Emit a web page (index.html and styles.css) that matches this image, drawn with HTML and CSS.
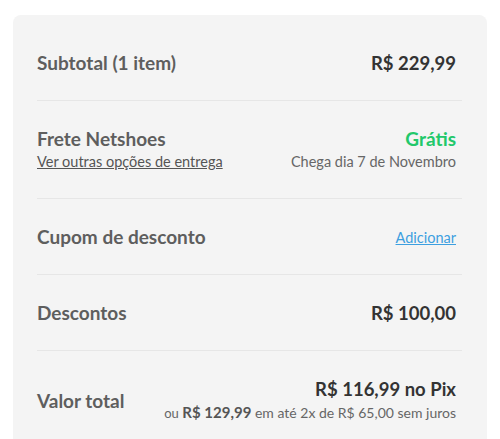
FILE: index.html
```
<!DOCTYPE html>
<html lang="pt-BR">
<head>
    <meta charset="UTF-8">
    <title>Resumo do pedido</title>
    <link rel="stylesheet" href="styles.css">
</head>
<body>
    <div class="summary">
        <div class="row">
            <span class="label">Subtotal (1 item)</span>
            <span class="price">R$ 229,99</span>
        </div>
        <div class="row">
            <div>
                <div class="label">Frete Netshoes</div>
                <a href="#" class="sub-link">Ver outras opções de entrega</a>
            </div>
            <div class="right">
                <div class="free">Grátis</div>
                <div class="note">Chega dia 7 de Novembro</div>
            </div>
        </div>
        <div class="row">
            <span class="label">Cupom de desconto</span>
            <a href="#" class="add-link">Adicionar</a>
        </div>
        <div class="row">
            <span class="label">Descontos</span>
            <span class="price">R$ 100,00</span>
        </div>
        <div class="row last">
            <span class="label">Valor total</span>
            <div class="right">
                <div class="price">R$ 116,99 no Pix</div>
                <div class="note small"><span class="or">ou</span> <strong>R$ 129,99</strong> em até 2x de R$ 65,00 sem juros</div>
            </div>
        </div>
    </div>
</body>
</html>
```

FILE: styles.css
```
body {
    margin: 0;
    font-family: Lato, "Open Sans", sans-serif;
    background: #fff;
}
.summary {
    margin: 15px 13px 0 13px;
    padding: 10px 25px 0 24px;
    background-color: #f4f4f4;
    border-radius: 8px;
}
.row {
    display: flex;
    justify-content: space-between;
    align-items: center;
    padding: 26px 6px 25px 0;
    border-bottom: 1px solid #e6e6e6;
}
.row.last {
    border-bottom: none;
}
.label {
    font-size: 19px;
    line-height: 24px;
    font-weight: 700;
    color: #5e5e5e;
}
.price {
    font-size: 18.5px;
    line-height: 24px;
    font-weight: 700;
    color: #333;
}
.right {
    text-align: right;
}
.free {
    font-size: 19px;
    line-height: 24px;
    font-weight: 700;
    color: #22c86a;
}
.note {
    font-size: 14.5px;
    line-height: 22px;
    color: #666;
}
.note.small {
    font-size: 14px;
}
.note .or {
    font-size: 13px;
}
.note strong {
    font-size: 15px;
    color: #555;
    font-weight: 700;
}
.sub-link {
    display: block;
    font-size: 14.5px;
    line-height: 22px;
    color: #555;
    text-decoration: underline;
}
.add-link {
    font-size: 14.5px;
    color: #3d9fe0;
    text-decoration: underline;
}
```
